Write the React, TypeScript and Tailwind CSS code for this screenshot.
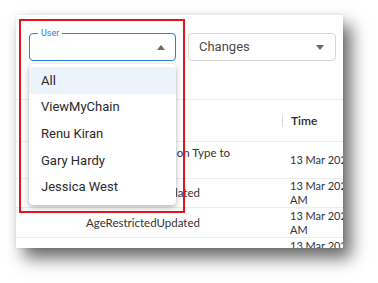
const users = ["All", "ViewMyChain", "Renu Kiran", "Gary Hardy", "Jessica West"];

const rows = [
  { h: "h-[37px]", text: ["Updated Verification Type to", "Manual"], date: ["13 Mar 2025"] },
  { h: "h-[29px]", text: ["AgeRestrictedUpdated"], date: ["13 Mar 2025", "AM"] },
  { h: "h-[30px]", text: ["AgeRestrictedUpdated"], date: ["13 Mar 2025", "AM"] },
  { h: "h-[30px]", text: ["AgeRestrictedUpdated"], date: ["13 Mar 2025", "AM"] },
];

function Caret({ up }: { up?: boolean }) {
  return (
    <svg width="8" height="5" viewBox="0 0 8 5" className="shrink-0">
      <path d={up ? "M0 5 L4 0 L8 5 Z" : "M0 0 L4 5 L8 0 Z"} fill="#6b6b6b" />
    </svg>
  );
}

function App() {
  return (
    <div className="h-[283px] w-[378px] overflow-hidden bg-white pl-[16px] pt-[15px]">
      <div className="relative h-[233px] w-[327px] overflow-hidden bg-white shadow-[8px_10px_16px_rgba(0,0,0,0.6),0_0_4px_rgba(0,0,0,0.08)]">
        {/* filters */}
        <div className="flex h-[85px] gap-[12px] border-b border-[#ececec] pl-[13px] pt-[18px] font-['Roboto',sans-serif]">
          <div className="relative flex h-[28px] w-[147px] items-center justify-end rounded-[4px] border-[1.5px] border-[#2f80d8] pr-[10px]">
            <span className="absolute -top-[7px] left-[8px] bg-white px-[3px] text-[9px] leading-[12px] text-[#2f80d8]">
              User
            </span>
            <Caret up />
          </div>
          <div className="flex h-[28px] w-[148px] items-center justify-between rounded-[4px] border border-[#d6d6d6] pl-[10px] pr-[11px]">
            <span className="text-[13px] text-[#4a4a4a]">Changes</span>
            <Caret />
          </div>
        </div>

        {/* table */}
        <div className="font-['Lato',sans-serif] text-[11.5px] text-[#333]">
          <div className="flex h-[42px] items-center border-b border-[#ececec]">
            <div className="w-[266px]" />
            <div className="flex items-center">
              <span className="h-[12px] w-px bg-[#d9d9d9]" />
              <span className="pl-[8px] text-[12px] font-semibold text-[#2b2b2b]">Time</span>
            </div>
          </div>
          {rows.map((r, i) => (
            <div key={i} className={`flex ${r.h} items-center border-b border-[#ececec]`}>
              <div className="w-[266px] shrink-0 pl-[70px] leading-[14px]">
                {r.text.map((t) => (
                  <div key={t} className="whitespace-nowrap">
                    {t}
                  </div>
                ))}
              </div>
              <div className="shrink-0 pl-[8px] text-[11px] leading-[14px]">
                {r.date.map((d) => (
                  <div key={d} className="whitespace-nowrap">
                    {d}
                  </div>
                ))}
              </div>
            </div>
          ))}
        </div>

        {/* open menu */}
        <div className="absolute left-[13px] top-[49px] h-[141px] w-[147px] rounded-[4px] bg-white pt-[3px] font-['Roboto',sans-serif] shadow-[0_3px_6px_rgba(0,0,0,0.25),0_0_2px_rgba(0,0,0,0.12)]">
          {users.map((u, i) => (
            <div
              key={u}
              className={`flex h-[26.7px] items-center pl-[12px] text-[13px] text-[#2a2a2a] ${i === 0 ? "bg-[#edf3fb]" : ""}`}
            >
              {u}
            </div>
          ))}
        </div>

        {/* annotation */}
        <div className="absolute left-[3px] top-[4px] h-[194px] w-[166px] border-2 border-[#e8141b]" />
      </div>
    </div>
  );
}

export default App;
